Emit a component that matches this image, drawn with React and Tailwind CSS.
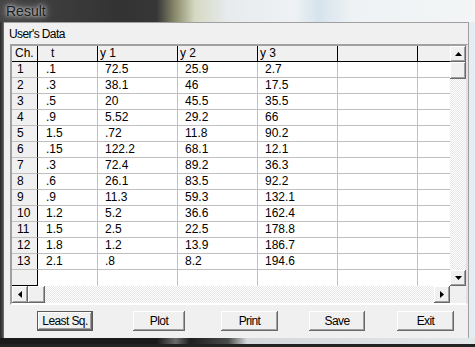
import React from "react";

const rows = [
  ["1", ".1", "72.5", "25.9", "2.7"],
  ["2", ".3", "38.1", "46", "17.5"],
  ["3", ".5", "20", "45.5", "35.5"],
  ["4", ".9", "5.52", "29.2", "66"],
  ["5", "1.5", ".72", "11.8", "90.2"],
  ["6", ".15", "122.2", "68.1", "12.1"],
  ["7", ".3", "72.4", "89.2", "36.3"],
  ["8", ".6", "26.1", "83.5", "92.2"],
  ["9", ".9", "11.3", "59.3", "132.1"],
  ["10", "1.2", "5.2", "36.6", "162.4"],
  ["11", "1.5", "2.5", "22.5", "178.8"],
  ["12", "1.8", "1.2", "13.9", "186.7"],
  ["13", "2.1", ".8", "8.2", "194.6"],
  ["", "", "", "", ""],
];

const raised =
  "bg-[#f0f0f0] shadow-[inset_-1px_-1px_0_#696969,inset_1px_1px_0_#ffffff,inset_-2px_-2px_0_#a0a0a0]";
const track =
  "bg-[repeating-conic-gradient(#ffffff_0_25%,#e6e6e6_0_50%)] bg-[length:2px_2px]";

const Arrow = ({ dir }) => {
  const pts = {
    up: "0,4 7,4 3.5,0",
    down: "0,0 7,0 3.5,4",
    left: "4,0 4,7 0,3.5",
    right: "0,0 0,7 4,3.5",
  }[dir];
  const vertical = dir === "up" || dir === "down";
  return (
    <svg width={vertical ? 7 : 4} height={vertical ? 4 : 7} viewBox={vertical ? "0 0 7 4" : "0 0 4 7"}>
      <polygon points={pts} fill="#000" />
    </svg>
  );
};

const SBtn = ({ dir, className = "" }) => (
  <div className={`${raised} flex items-center justify-center shrink-0 ${className}`}>
    {dir && <Arrow dir={dir} />}
  </div>
);

const Button = ({ label, w, ml, focused }) => (
  <div
    className={`h-[20px] flex items-center justify-center bg-[#f0f0f0] shrink-0 tracking-[-0.6px] ${
      focused
        ? "shadow-[inset_0_0_0_1px_#5a5a5a,inset_-2px_-2px_0_#696969,inset_2px_2px_0_#ffffff,inset_-3px_-3px_0_#a0a0a0]"
        : "shadow-[inset_-1px_-1px_0_#696969,inset_1px_1px_0_#ffffff,inset_-2px_-2px_0_#a0a0a0]"
    }`}
    style={{ width: w, marginLeft: ml }}
  >
    {label}
  </div>
);

export default function App() {
  const widths = ["w-[26px]", "w-[60px]", "w-[80px]", "w-[80px]", "w-[80px]", "w-[80px]", "w-[80px]"];
  const header = ["Ch.", "t", "y 1", "y 2", "y 3", "", ""];
  const headPad = ["pl-[3px]", "pl-[13px]", "pl-[2px]", "pl-[2px]", "pl-[2px]", "pl-[2px]", "pl-[2px]"];
  const dataPad = ["pl-[5px]", "pl-[8px]", "pl-[7px]", "pl-[7px]", "pl-[7px]", "pl-[7px]", "pl-[7px]"];

  return (
    <div className="w-[475px] h-[347px] overflow-hidden flex flex-col bg-[#1c1c1c] font-['Liberation_Sans',sans-serif] text-[12px] text-black">
      {/* title bar */}
      <div className="h-[22px] shrink-0 flex items-center pl-[6px] bg-[linear-gradient(90deg,#454545_0%,#333333_25%,#363636_33%,#8d8d6e_37%,#d5d9c2_41%,#e7ebed_48%,#eef2f4_62%,#d6e3ec_67%,#eef2f4_74%,#f3f5f6_100%)]">
        <span className="text-[14px] text-[#1a1a1a] [text-shadow:0_0_3px_#d0d0d0,0_0_6px_#bdbdbd,0_0_8px_#a8a8a8]">
          Result
        </span>
      </div>

      {/* body */}
      <div className="flex flex-1 min-h-0">
        <div className="w-[4px] shrink-0 bg-[linear-gradient(90deg,#2a2a2a,#444444_60%,#7a7a7a)]" />
        <div className="flex-1 bg-[#f0f0f0] border-t border-r border-[#a0a0a0] flex flex-col">
          <div className="pl-[5px] pt-[4px] leading-[15px] h-[21px] tracking-[-0.6px]">User's Data</div>

          {/* grid */}
          <div className="ml-[6px] w-[458px] h-[261px] border-2 border-t-[#a0a0a0] border-l-[#a0a0a0] border-b-[#ffffff] border-r-[#e3e3e3] bg-white flex flex-col">
            <div className="flex h-[240px]">
              <div className="w-[438px] overflow-hidden flex flex-col">
                <div className="flex h-[16px] shrink-0">
                  {header.map((h, i) => (
                    <div
                      key={i}
                      className={`${widths[i]} ${headPad[i]} shrink-0 h-full bg-[#f0f0f0] border-r border-b border-black leading-[15px] whitespace-nowrap`}
                    >
                      {h}
                    </div>
                  ))}
                </div>
                {rows.map((r, ri) => (
                  <div key={ri} className="flex h-[16px] shrink-0">
                    {[...r, "", ""].map((c, i) => (
                      <div
                        key={i}
                        className={`${widths[i]} ${dataPad[i]} shrink-0 h-full leading-[15px] whitespace-nowrap border-r border-b ${
                          i === 0
                            ? `bg-[#f0f0f0] border-r-black ${ri === rows.length - 1 ? "border-b-black" : "border-b-[#c0c0c0]"}`
                            : `border-[#c0c0c0] ${ri === rows.length - 1 ? "border-b-transparent" : ""}`
                        }`}
                      >
                        {c}
                      </div>
                    ))}
                  </div>
                ))}
              </div>
              {/* vertical scrollbar */}
              <div className="w-[16px] flex flex-col">
                <SBtn dir="up" className="h-[16px]" />
                <SBtn className="h-[17px]" />
                <div className={`flex-1 ${track}`} />
                <SBtn dir="down" className="h-[16px]" />
              </div>
            </div>
            {/* horizontal scrollbar */}
            <div className="flex h-[17px]">
              <SBtn dir="left" className="w-[16px] h-full" />
              <SBtn className="w-[17px] h-full" />
              <div className={`flex-1 ${track}`} />
              <SBtn dir="right" className="w-[16px] h-full" />
              <div className="w-[16px] bg-[#f0f0f0]" />
            </div>
          </div>

          {/* buttons */}
          <div className="flex mt-[6px]">
            <Button label="Least Sq." w={56} ml={33} focused />
            <Button label="Plot" w={52} ml={40} />
            <Button label="Print" w={57} ml={36} />
            <Button label="Save" w={56} ml={31} />
            <Button label="Exit" w={57} ml={32} />
          </div>
        </div>
        <div className="w-[6px] shrink-0 bg-[#e3edf3]" />
      </div>

      {/* bottom frame */}
      <div className="h-[9px] shrink-0 flex flex-col">
        <div className="h-[6px] bg-[linear-gradient(90deg,#1a1a1a_0%,#1a1a1a_33%,#6a6a6a_37%,#1e1e1e_40%,#4a4a4a_48%,#d4d8da_52%,#e2e7ea_100%)]" />
        <div className="h-[3px] bg-[#222222]" />
      </div>
    </div>
  );
}
